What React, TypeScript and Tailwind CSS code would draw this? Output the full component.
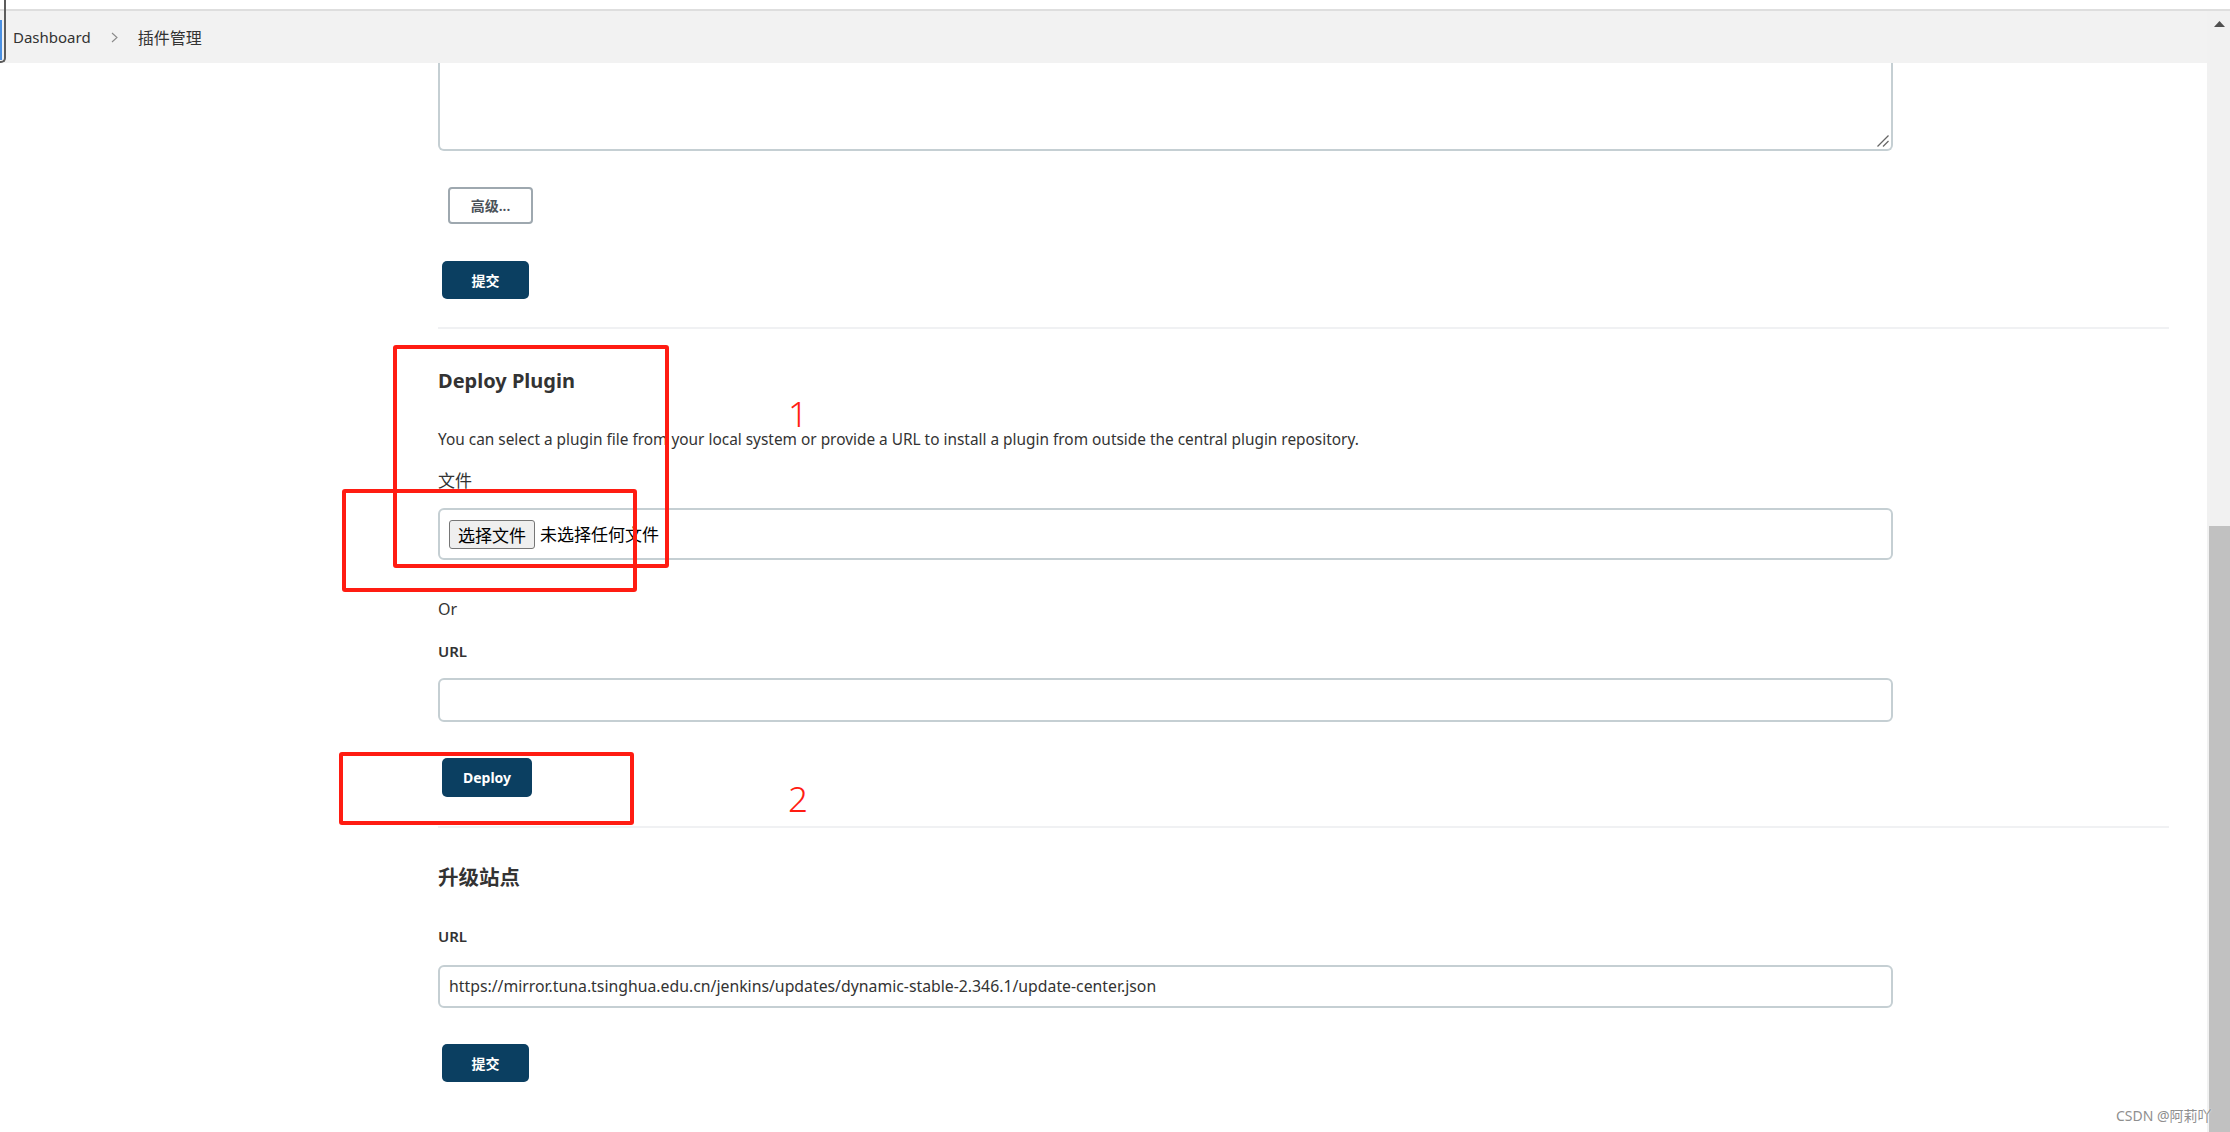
import React from "react";

function NavyButton({ label, w, h }: { label: string; w: string; h: string }) {
  return (
    <button
      className={`${w} ${h} ml-[4px] bg-[#0b3f61] rounded-[5px] text-white text-[14px] font-bold flex items-center justify-center`}
    >
      {label}
    </button>
  );
}

export default function App() {
  return (
    <div className="relative w-[2230px] h-[1132px] overflow-hidden bg-white text-[#333] flex flex-col font-['Noto_Sans','Noto_Sans_CJK_SC',sans-serif]">
      {/* top strip */}
      <div className="h-[9px] shrink-0 bg-white" />
      <div className="h-[2px] shrink-0 bg-[#dedede]" />

      <div className="flex flex-1 min-h-0">
        <main className="flex-1 min-w-0 flex flex-col">
          {/* breadcrumb bar */}
          <header className="h-[52px] shrink-0 bg-[#f2f2f2] flex items-center pl-[13px]">
            <span className="text-[15px] text-[#333] leading-none">Dashboard</span>
            <svg className="ml-[20px]" width="7" height="11" viewBox="0 0 7 11" fill="none">
              <polyline points="1,1 6,5.5 1,10" stroke="#8a8a8a" strokeWidth="1.1" />
            </svg>
            <span className="ml-[20px] text-[16px] text-[#333] leading-none font-['Noto_Sans_CJK_SC',sans-serif]">
              插件管理
            </span>
          </header>

          {/* content */}
          <div className="pl-[438px] pr-[38px] flex flex-col items-start">
            {/* textarea remainder */}
            <div className="relative w-[1455px] h-[88px] border-x-2 border-b-2 border-[#c5cfd3] rounded-b-[6px] bg-white">
              <svg className="absolute right-[2px] bottom-[2px]" width="12" height="12" viewBox="0 0 12 12">
                <line x1="11.5" y1="0.5" x2="0.5" y2="11.5" stroke="#666" strokeWidth="1.2" />
                <line x1="11.5" y1="6" x2="6" y2="11.5" stroke="#666" strokeWidth="1.2" />
              </svg>
            </div>

            <button className="mt-[36px] ml-[10px] w-[85px] h-[37px] border-2 border-[#9ea8af] rounded-[4px] bg-white text-[14px] font-semibold text-[#4b5259] flex items-center justify-center">
              高级...
            </button>

            <div className="mt-[37px]">
              <NavyButton label="提交" w="w-[87px]" h="h-[38px]" />
            </div>

            <div className="mt-[28px] h-[2px] w-[1731px] bg-[#f0f1f3]" />

            {/* Deploy Plugin */}
            <h2 className="mt-[38px] text-[20px] leading-[28px] font-bold text-[#333]">Deploy Plugin</h2>
            <p className="mt-[34px] text-[15.4px] leading-[22px] text-[#333]">
              You can select a plugin file from your local system or provide a URL to install a plugin from outside the central plugin repository.
            </p>
            <div className="mt-[19px] text-[17px] leading-[22px] text-[#333]">文件</div>
            <div className="mt-[16px] w-[1455px] h-[52px] border-2 border-[#c5cfd3] rounded-[6px] flex items-center pl-[9px] bg-white">
              <span className="h-[29px] px-[8px] bg-[#efefef] border border-[#767676] rounded-[3px] text-[17px] leading-[27px] text-black font-['Noto_Sans_CJK_SC',sans-serif]">
                选择文件
              </span>
              <span className="ml-[5px] text-[17px] text-black font-['Noto_Sans_CJK_SC',sans-serif]">未选择任何文件</span>
            </div>

            <div className="mt-[38px] text-[16px] leading-[22px] text-[#333]">Or</div>
            <div className="mt-[20px] text-[15px] leading-[22px] font-semibold text-[#333]">URL</div>
            <div className="mt-[16px] w-[1455px] h-[44px] border-2 border-[#c5cfd3] rounded-[6px] bg-white" />

            <div className="mt-[36px]">
              <NavyButton label="Deploy" w="w-[90px]" h="h-[39px]" />
            </div>

            <div className="mt-[29px] h-[2px] w-[1731px] bg-[#f0f1f3]" />

            {/* 升级站点 */}
            <h2 className="mt-[35px] text-[20.5px] leading-[28px] font-bold text-[#333]">升级站点</h2>
            <div className="mt-[34px] text-[15px] leading-[22px] font-semibold text-[#333]">URL</div>
            <div className="mt-[18px] w-[1455px] h-[43px] border-2 border-[#c5cfd3] rounded-[6px] bg-white flex items-center pl-[9px]">
              <span className="text-[15.8px] text-[#333]">
                https://mirror.tuna.tsinghua.edu.cn/jenkins/updates/dynamic-stable-2.346.1/update-center.json
              </span>
            </div>

            <div className="mt-[36px]">
              <NavyButton label="提交" w="w-[87px]" h="h-[38px]" />
            </div>
          </div>
        </main>

        {/* scrollbar */}
        <div className="w-[23px] shrink-0 bg-[#f1f1f1] flex flex-col">
          <svg className="mt-[10px] ml-[7px]" width="11" height="6" viewBox="0 0 11 6">
            <polygon points="5.5,0 11,6 0,6" fill="#505050" />
          </svg>
          <div className="h-[499px] shrink-0" />
          <div className="flex-1 ml-[2px] bg-[#c1c1c1]" />
        </div>
      </div>

      {/* left window edge artifact */}
      <div className="absolute left-0 top-0 w-[6px] h-[63px] border-r-2 border-b-2 border-[#5c5c5c] rounded-br-[5px]">
        <div className="absolute left-0 top-[20px] w-[2px] h-[40px] bg-[#4a90e2]" />
      </div>

      {/* red annotations */}
      <div className="absolute left-[393px] top-[345px] w-[276px] h-[223px] border-4 border-[#ff1c12] rounded-[3px]" />
      <div className="absolute left-[342px] top-[489px] w-[295px] h-[103px] border-4 border-[#ff1c12] rounded-[3px]" />
      <div className="absolute left-[339px] top-[752px] w-[295px] h-[73px] border-4 border-[#ff1c12] rounded-[3px]" />
      <div className="absolute left-[788px] top-[396px] text-[35px] leading-none text-[#ff1c12] font-light">1</div>
      <div className="absolute left-[788px] top-[781px] text-[35px] leading-none text-[#ff1c12] font-light">2</div>

      {/* watermark */}
      <div className="absolute left-[2116px] top-[1106px] text-[14px] leading-[20px] text-[#8f8f8f] [text-shadow:0_0_2px_#fff]">
        CSDN @阿莉吖
      </div>
    </div>
  );
}
